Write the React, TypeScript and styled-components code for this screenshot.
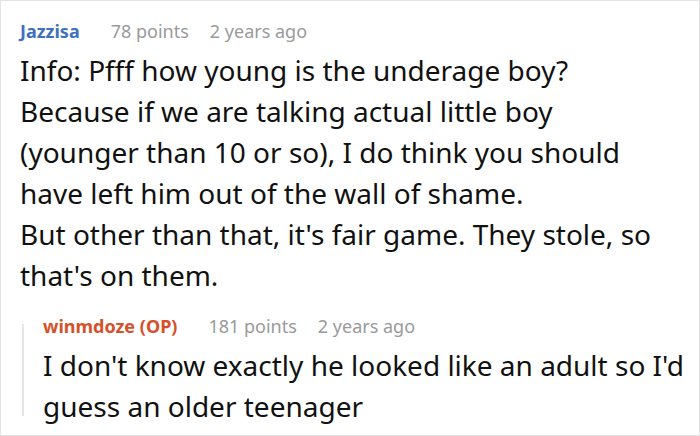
import React from "react";
import styled, { createGlobalStyle } from "styled-components";

const GlobalStyle = createGlobalStyle`
  html, body {
    margin: 0;
    padding: 0;
    background: #fff;
  }
  body {
    font-family: "Noto Sans", "Open Sans", sans-serif;
  }
`;

const Frame = styled.div`
  width: 700px;
  height: 436px;
  box-sizing: border-box;
  border: 1px solid #e3e3e3;
  padding: 18px 10px 0 19px;
  overflow: hidden;
`;

const Comment = styled.div`
  display: flex;
  flex-direction: column;
`;

const Header = styled.div`
  display: flex;
  align-items: baseline;
  gap: 21px;
  height: 24px;
  line-height: 24px;
  white-space: nowrap;
`;

const Author = styled.span<{ $op?: boolean }>`
  font-weight: 700;
  font-size: 18px;
  margin-right: 10px;
  color: ${(p) => (p.$op ? "#d6512a" : "#3e6fc0")};
`;

const Meta = styled.span`
  font-size: 18px;
  color: #9a9a9a;
`;

const Body = styled.p`
  margin: 7px 0 0;
  font-size: 28px;
  line-height: 41px;
  color: #111;
  white-space: nowrap;
`;

const Reply = styled.div`
  display: flex;
  margin-top: 18px;
  margin-left: 2px;
`;

const Rail = styled.div`
  width: 2px;
  margin: 10px 19px 11px 0;
  background: #e6e6e6;
  flex-shrink: 0;
`;

const ReplyContent = styled.div`
  display: flex;
  flex-direction: column;
`;

export default function App() {
  return (
    <>
      <GlobalStyle />
      <Frame>
        <Comment>
          <Header>
            <Author>Jazzisa</Author>
            <Meta>78 points</Meta>
            <Meta>2 years ago</Meta>
          </Header>
          <Body>
            Info: Pfff how young is the underage boy?
            <br />
            Because if we are talking actual little boy
            <br />
            (younger than 10 or so), I do think you should
            <br />
            have left him out of the wall of shame.
            <br />
            But other than that, it's fair game. They stole, so
            <br />
            that's on them.
          </Body>
        </Comment>
        <Reply>
          <Rail />
          <ReplyContent>
            <Header>
              <Author $op>winmdoze (OP)</Author>
              <Meta>181 points</Meta>
              <Meta>2 years ago</Meta>
            </Header>
            <Body>
              I don't know exactly he looked like an adult so I'd
              <br />
              guess an older teenager
            </Body>
          </ReplyContent>
        </Reply>
      </Frame>
    </>
  );
}
